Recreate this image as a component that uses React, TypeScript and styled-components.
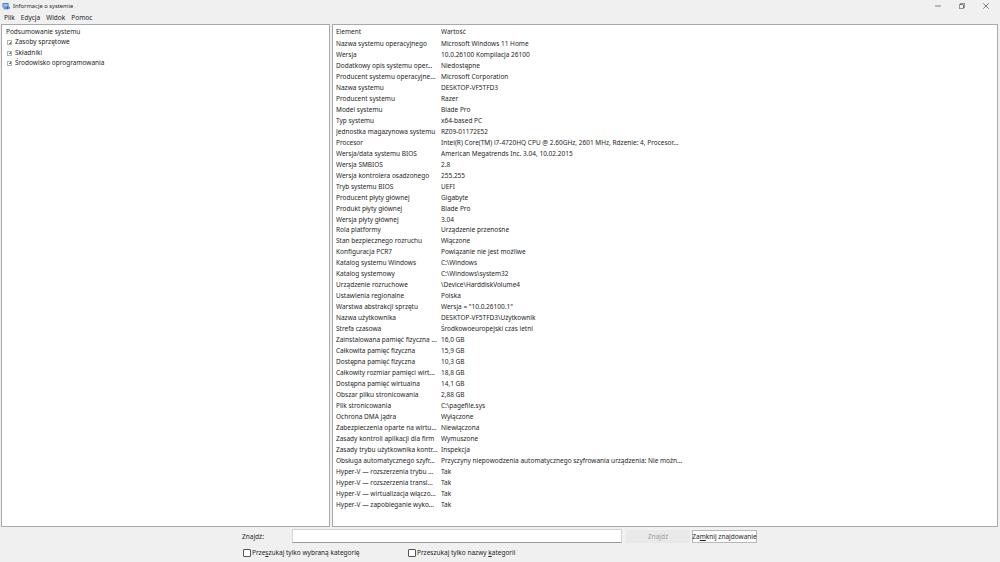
import styled, { createGlobalStyle } from "styled-components";

const GlobalStyle = createGlobalStyle`
  html, body {
    margin: 0;
    padding: 0;
    background: #f0f0f0;
  }
  body {
    font-family: "Noto Sans", "Liberation Sans", Arial, sans-serif;
    color: #262626;
  }
`;

const rows: [string, string][] = [
  ["Nazwa systemu operacyjnego", "Microsoft Windows 11 Home"],
  ["Wersja", "10.0.26100 Kompilacja 26100"],
  ["Dodatkowy opis systemu oper...", "Niedostępne"],
  ["Producent systemu operacyjne...", "Microsoft Corporation"],
  ["Nazwa systemu", "DESKTOP-VF5TFD3"],
  ["Producent systemu", "Razer"],
  ["Model systemu", "Blade Pro"],
  ["Typ systemu", "x64-based PC"],
  ["Jednostka magazynowa systemu", "RZ09-01172E52"],
  ["Procesor", "Intel(R) Core(TM) i7-4720HQ CPU @ 2.60GHz, 2601 MHz, Rdzenie: 4, Procesor..."],
  ["Wersja/data systemu BIOS", "American Megatrends Inc. 3.04, 10.02.2015"],
  ["Wersja SMBIOS", "2.8"],
  ["Wersja kontrolera osadzonego", "255.255"],
  ["Tryb systemu BIOS", "UEFI"],
  ["Producent płyty głównej", "Gigabyte"],
  ["Produkt płyty głównej", "Blade Pro"],
  ["Wersja płyty głównej", "3.04"],
  ["Rola platformy", "Urządzenie przenośne"],
  ["Stan bezpiecznego rozruchu", "Włączone"],
  ["Konfiguracja PCR7", "Powiązanie nie jest możliwe"],
  ["Katalog systemu Windows", "C:\\Windows"],
  ["Katalog systemowy", "C:\\Windows\\system32"],
  ["Urządzenie rozruchowe", "\\Device\\HarddiskVolume4"],
  ["Ustawienia regionalne", "Polska"],
  ["Warstwa abstrakcji sprzętu", 'Wersja = "10.0.26100.1"'],
  ["Nazwa użytkownika", "DESKTOP-VF5TFD3\\Użytkownik"],
  ["Strefa czasowa", "Środkowoeuropejski czas letni"],
  ["Zainstalowana pamięć fizyczna ...", "16,0 GB"],
  ["Całkowita pamięć fizyczna", "15,9 GB"],
  ["Dostępna pamięć fizyczna", "10,3 GB"],
  ["Całkowity rozmiar pamięci wirt...", "18,8 GB"],
  ["Dostępna pamięć wirtualna", "14,1 GB"],
  ["Obszar pliku stronicowania", "2,88 GB"],
  ["Plik stronicowania", "C:\\pagefile.sys"],
  ["Ochrona DMA jądra", "Wyłączone"],
  ["Zabezpieczenia oparte na wirtu...", "Niewłączona"],
  ["Zasady kontroli aplikacji dla firm", "Wymuszone"],
  ["Zasady trybu użytkownika kontr...", "Inspekcja"],
  ["Obsługa automatycznego szyfr...", "Przyczyny niepowodzenia automatycznego szyfrowania urządzenia: Nie możn..."],
  ["Hyper-V — rozszerzenia trybu ...", "Tak"],
  ["Hyper-V — rozszerzenia transl...", "Tak"],
  ["Hyper-V — wirtualizacja włączo...", "Tak"],
  ["Hyper-V — zapobieganie wyko...", "Tak"],
];

const tree = ["Zasoby sprzętowe", "Składniki", "Środowisko oprogramowania"];

const Window = styled.div`
  width: 1000px;
  height: 562px;
  display: flex;
  flex-direction: column;
  background: #f0f0f0;
  font-size: 6.5px;
  overflow: hidden;
`;

const TitleBar = styled.div`
  height: 12px;
  display: flex;
  align-items: center;
  padding: 0 2px 0 2px;
`;

const Title = styled.span`
  margin-left: 3px;
  font-size: 5.8px;
  color: #2a2a2a;
  flex: 1;
`;

const Controls = styled.div`
  display: flex;
  align-items: center;
  height: 100%;
`;

const ControlButton = styled.div`
  width: 24px;
  height: 12px;
  display: flex;
  align-items: center;
  justify-content: center;
`;

const MenuBar = styled.div`
  height: 11px;
  display: flex;
  align-items: center;
  gap: 6px;
  padding-left: 4px;
`;

const Main = styled.div`
  margin-top: 1px;
  height: 503px;
  display: flex;
  gap: 2px;
  padding: 0 2px 0 1px;
`;

const Pane = styled.div<{ $width?: number }>`
  background: #fff;
  border: 1px solid #a9a9a9;
  box-sizing: border-box;
  ${({ $width }) => ($width ? `width: ${$width}px; flex: none;` : "flex: 1;")}
  overflow: hidden;
`;

const TreeList = styled.div`
  padding: 2px 0 0 3px;
  line-height: 10.4px;
`;

const TreeRoot = styled.div`
  padding-left: 1px;
`;

const TreeItem = styled.div`
  display: flex;
  align-items: center;
  padding-left: 2px;
  gap: 3px;
`;

const Expander = styled.span`
  width: 5px;
  height: 5px;
  border: 1px solid #b5b5b5;
  box-sizing: border-box;
  position: relative;
  &::before,
  &::after {
    content: "";
    position: absolute;
    background: #777;
  }
  &::before {
    left: 0.5px;
    right: 0.5px;
    top: 1.5px;
    height: 1px;
  }
  &::after {
    top: 0.5px;
    bottom: 0.5px;
    left: 1.5px;
    width: 1px;
  }
`;

const Table = styled.div`
  padding: 2px 0 0 3px;
`;

const Row = styled.div<{ $header?: boolean }>`
  display: grid;
  grid-template-columns: 105px 1fr;
  height: ${({ $header }) => ($header ? 12 : 10.98)}px;
  line-height: 10.95px;
  white-space: nowrap;
`;

const Cell = styled.span`
  overflow: hidden;
`;

const FindArea = styled.div`
  flex: 1;
  display: flex;
  flex-direction: column;
  padding: 2px 0 0 242px;
`;

const FindRow = styled.div`
  display: flex;
  align-items: center;
  height: 14px;
`;

const FindLabel = styled.span`
  width: 50px;
`;

const FindInput = styled.div`
  width: 330px;
  height: 14px;
  box-sizing: border-box;
  background: #fff;
  border: 1px solid #d5d5d5;
  border-bottom-color: #9a9a9a;
`;

const Button = styled.div<{ $disabled?: boolean; $width: number }>`
  width: ${({ $width }) => $width}px;
  height: 13px;
  box-sizing: border-box;
  display: flex;
  align-items: center;
  justify-content: center;
  white-space: nowrap;
  margin-left: ${({ $disabled }) => ($disabled ? 4 : 2)}px;
  background: ${({ $disabled }) => ($disabled ? "#e9e9e9" : "#fdfdfd")};
  border: 1px solid ${({ $disabled }) => ($disabled ? "#e9e9e9" : "#b8b8b8")};
  color: ${({ $disabled }) => ($disabled ? "#9c9c9c" : "#1f1f1f")};
`;

const CheckRow = styled.div`
  display: flex;
  align-items: center;
  margin-top: 5px;
  padding-left: 1px;
`;

const CheckOption = styled.label<{ $width?: number }>`
  display: flex;
  align-items: center;
  gap: 1px;
  white-space: nowrap;
  ${({ $width }) => ($width ? `width: ${$width}px;` : "")}
`;

const CheckBox = styled.span`
  width: 6px;
  height: 6px;
  border: 1px solid #555;
  border-radius: 1px;
  background: #fff;
`;

const U = styled.span`
  text-decoration: underline;
`;

const AppIcon = () => (
  <svg width="8" height="8" viewBox="0 0 16 16">
    <rect x="1" y="2" width="12" height="9" rx="1" fill="#3a6fc8" />
    <rect x="2.5" y="3.5" width="9" height="6" fill="#8fc0ef" />
    <rect x="5" y="11" width="4" height="2" fill="#4a5a78" />
    <rect x="3" y="13" width="8" height="1.5" fill="#4a5a78" />
    <circle cx="12.5" cy="11.5" r="3.2" fill="#2560c0" />
    <rect x="12" y="10.8" width="1" height="2.8" fill="#fff" />
    <rect x="12" y="9.4" width="1" height="0.9" fill="#fff" />
  </svg>
);

const App = () => {
  return (
    <>
      <GlobalStyle />
      <Window>
        <TitleBar>
          <AppIcon />
          <Title>Informacje o systemie</Title>
          <Controls>
            <ControlButton>
              <svg width="6" height="6" viewBox="0 0 10 10">
                <line x1="0" y1="5" x2="10" y2="5" stroke="#333" strokeWidth="1" />
              </svg>
            </ControlButton>
            <ControlButton>
              <svg width="6" height="6" viewBox="0 0 10 10" fill="none" stroke="#333" strokeWidth="1">
                <rect x="0.5" y="2.5" width="7" height="7" rx="1" />
                <path d="M2.5 2.5V1.5a1 1 0 0 1 1-1h5a1 1 0 0 1 1 1v5a1 1 0 0 1-1 1h-1" />
              </svg>
            </ControlButton>
            <ControlButton>
              <svg width="6" height="6" viewBox="0 0 10 10" stroke="#333" strokeWidth="1">
                <line x1="0.5" y1="0.5" x2="9.5" y2="9.5" />
                <line x1="9.5" y1="0.5" x2="0.5" y2="9.5" />
              </svg>
            </ControlButton>
          </Controls>
        </TitleBar>
        <MenuBar>
          <span>Plik</span>
          <span>Edycja</span>
          <span>Widok</span>
          <span>Pomoc</span>
        </MenuBar>
        <Main>
          <Pane $width={329}>
            <TreeList>
              <TreeRoot>Podsumowanie systemu</TreeRoot>
              {tree.map((t) => (
                <TreeItem key={t}>
                  <Expander />
                  {t}
                </TreeItem>
              ))}
            </TreeList>
          </Pane>
          <Pane>
            <Table>
              <Row $header>
                <Cell>Element</Cell>
                <Cell>Wartość</Cell>
              </Row>
              {rows.map(([k, v]) => (
                <Row key={k}>
                  <Cell>{k}</Cell>
                  <Cell>{v}</Cell>
                </Row>
              ))}
            </Table>
          </Pane>
        </Main>
        <FindArea>
          <FindRow>
            <FindLabel>
              Zna<U>j</U>dź:
            </FindLabel>
            <FindInput />
            <Button $disabled $width={64}>
              Znajdź
            </Button>
            <Button $width={65}>
              Za<U>m</U>knij znajdowanie
            </Button>
          </FindRow>
          <CheckRow>
            <CheckOption $width={165}>
              <CheckBox />
              <span>
                Prze<U>s</U>zukaj tylko wybraną kategorię
              </span>
            </CheckOption>
            <CheckOption>
              <CheckBox />
              <span>
                Przeszukaj tylko nazwy <U>k</U>ategorii
              </span>
            </CheckOption>
          </CheckRow>
        </FindArea>
      </Window>
    </>
  );
};

export default App;
